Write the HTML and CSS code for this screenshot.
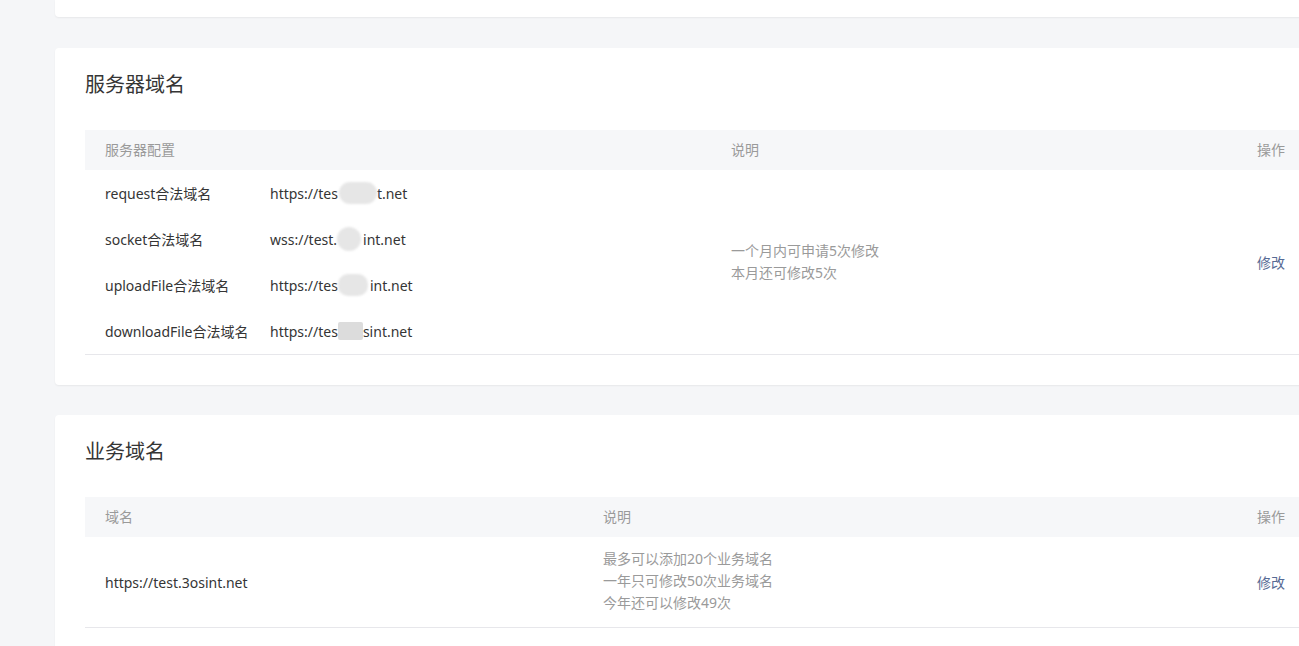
FILE: index.html
```html
<!DOCTYPE html>
<html lang="zh-CN">
<head>
    <meta charset="UTF-8">
    <title>开发设置</title>
    <link rel="stylesheet" href="styles.css">
</head>
<body>
    <div class="page">
        <div class="card card-top"></div>

        <div class="card">
            <h2 class="card-title">服务器域名</h2>
            <div class="table table-server">
                <div class="th">服务器配置</div>
                <div class="th">说明</div>
                <div class="th th-right">操作</div>

                <div class="td server-list">
                    <div class="server-row">
                        <span class="server-label">request合法域名</span>
                        <span class="server-value">https://tes<span class="mask mask-pill"></span>t.net</span>
                    </div>
                    <div class="server-row">
                        <span class="server-label">socket合法域名</span>
                        <span class="server-value">wss://test.<span class="mask mask-round"></span>int.net</span>
                    </div>
                    <div class="server-row">
                        <span class="server-label">uploadFile合法域名</span>
                        <span class="server-value">https://tes<span class="mask mask-soft"></span>int.net</span>
                    </div>
                    <div class="server-row">
                        <span class="server-label">downloadFile合法域名</span>
                        <span class="server-value">https://tes<span class="mask mask-box"></span>sint.net</span>
                    </div>
                </div>
                <div class="td td-desc">
                    <p>一个月内可申请5次修改</p>
                    <p>本月还可修改5次</p>
                </div>
                <div class="td td-op"><a href="#" class="link">修改</a></div>
            </div>
        </div>

        <div class="card">
            <h2 class="card-title">业务域名</h2>
            <div class="table table-biz">
                <div class="th">域名</div>
                <div class="th">说明</div>
                <div class="th th-right">操作</div>

                <div class="td td-domain">https://test.3osint.net</div>
                <div class="td td-desc td-desc-biz">
                    <p>最多可以添加20个业务域名</p>
                    <p>一年只可修改50次业务域名</p>
                    <p>今年还可以修改49次</p>
                </div>
                <div class="td td-op"><a href="#" class="link">修改</a></div>
            </div>
        </div>
    </div>
</body>
</html>
```

FILE: styles.css
```css
html, body {
    margin: 0;
    padding: 0;
    overflow: hidden;
}
body {
    background-color: #f5f6f8;
    font-family: "Noto Sans", "Noto Sans CJK SC", sans-serif;
    font-size: 14px;
    color: #353535;
}
.page {
    padding-left: 55px;
    width: 1280px;
}
.card {
    background-color: #fff;
    border-radius: 4px;
    box-shadow: 0 1px 2px rgba(0, 0, 0, 0.06);
    padding: 23px 30px 30px;
    margin-bottom: 30px;
}
.card-top {
    height: 17px;
    padding: 0;
    margin-bottom: 31px;
    border-radius: 0 0 4px 4px;
}
.card-title {
    margin: 0 0 31px;
    font-size: 20px;
    font-weight: normal;
    line-height: 28px;
    color: #353535;
}
.table {
    display: grid;
    border-bottom: 1px solid #e7e7eb;
}
.table-server {
    grid-template-columns: 626px 1fr auto;
}
.table-biz {
    grid-template-columns: 498px 1fr auto;
}
.th {
    background-color: #f6f7f9;
    color: #9a9a9a;
    height: 40px;
    line-height: 40px;
    padding: 0 20px;
}
.th-right {
    text-align: right;
}
.td {
    padding: 0 20px;
}
.server-row {
    display: flex;
    height: 46px;
    align-items: center;
}
.server-label {
    width: 165px;
    flex-shrink: 0;
}
.server-value {
    display: inline-flex;
    align-items: center;
}
.mask {
    display: inline-block;
    height: 22px;
    background-color: #e6e6e6;
    filter: blur(1px);
}
.mask-pill {
    width: 38px;
    border-radius: 11px;
    margin-left: 1px;
}
.mask-round {
    width: 24px;
    height: 24px;
    border-radius: 50%;
    margin-right: 2px;
}
.mask-soft {
    width: 30px;
    border-radius: 10px;
    margin-right: 2px;
}
.mask-box {
    width: 25px;
    height: 18px;
    border-radius: 2px;
    background-color: #dcdcdc;
    filter: none;
}
.td-desc {
    display: flex;
    flex-direction: column;
    justify-content: center;
    color: #9a9a9a;
}
.td-desc p {
    margin: 0;
    line-height: 22px;
}
.td-desc-biz {
    padding-top: 11px;
    padding-bottom: 13px;
}
.td-domain {
    display: flex;
    align-items: center;
}
.td-op {
    display: flex;
    align-items: center;
    justify-content: flex-end;
}
.link {
    color: #576b95;
    text-decoration: none;
}
```
